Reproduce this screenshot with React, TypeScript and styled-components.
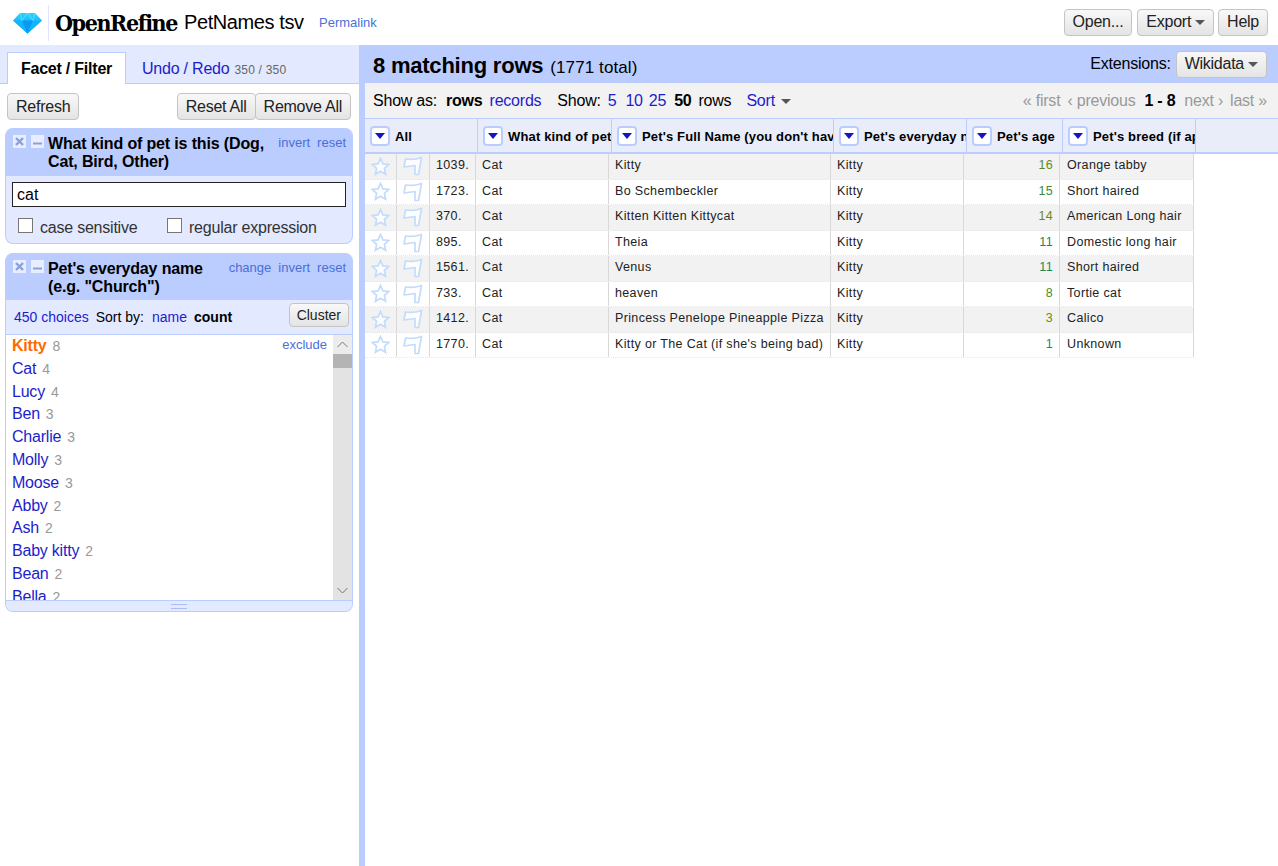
import React, { FC } from 'react'
import styled, { createGlobalStyle } from 'styled-components'

const BLUE = '#bbccff'
const LIGHT = '#e3e9ff'
const LINK = '#1d1dcc'
const ACTION = '#4a6fd8'

const GlobalStyle = createGlobalStyle`
    html, body {
        margin: 0;
        padding: 0;
        height: 100%;
        background: #fff;
        overflow: hidden;
    }
    body {
        font-family: "Liberation Sans", Arial, sans-serif;
        font-size: 16px;
        letter-spacing: -0.22px;
        color: #000;
    }
`

const Page = styled.div`
    width: 1278px;
    height: 866px;
    display: flex;
    flex-direction: column;
`

const Header = styled.header`
    height: 45px;
    flex: none;
    display: flex;
    align-items: center;
    padding: 0 10px 0 13px;
`

const LogoDivider = styled.div`
    width: 1px;
    height: 36px;
    margin: 0 6px 0 6px;
    background: #dde5ff;
`

const Brand = styled.span`
    font-family: "DejaVu Serif Condensed", "DejaVu Serif", serif;
    font-stretch: condensed;
    font-weight: bold;
    font-size: 23px;
    letter-spacing: -1.4px;
    width: 129px;
    white-space: nowrap;
`

const ProjectName = styled.span`
    font-size: 20px;
    width: 135px;
    letter-spacing: -0.4px;
    white-space: nowrap;
`

const Permalink = styled.a`
    font-size: 13px;
    letter-spacing: 0;
    color: ${ACTION};
`

const HeaderButtons = styled.div`
    margin-left: auto;
    display: flex;
    gap: 4px;
    margin-top: -1px;
`

const Button = styled.button<{ $joined?: boolean }>`
    height: 27px;
    padding: 0 8px;
    font: 16px "Liberation Sans", Arial, sans-serif;
    letter-spacing: -0.25px;
    color: #222;
    border: 1px solid #c4c4c4;
    border-radius: 4px;
    background: linear-gradient(#f8f8f8, #e4e4e4);
    white-space: nowrap;
    ${({ $joined }) => $joined && 'margin-left: -1px;'}
`

const OpenButton = styled(Button)`
    margin-right: 1px;
`

const Caret = styled.span<{ $gap?: number }>`
    display: inline-block;
    margin-left: ${({ $gap }) => $gap ?? 4}px;
    vertical-align: 2px;
    border-left: 5px solid transparent;
    border-right: 5px solid transparent;
    border-top: 5px solid #555;
`

const Main = styled.div`
    flex: 1;
    display: flex;
    min-height: 0;
`

const LeftPanel = styled.aside`
    width: 359px;
    flex: none;
    border-right: 6px solid ${BLUE};
`

const TabBar = styled.div`
    height: 39px;
    box-sizing: border-box;
    background: ${LIGHT};
    border-bottom: 1px solid ${BLUE};
    padding: 7px 0 0 7px;
    display: flex;
    align-items: flex-end;
`

const ActiveTab = styled.div`
    width: 119px;
    height: 32px;
    margin-bottom: -1px;
    box-sizing: border-box;
    background: #fff;
    border: 1px solid ${BLUE};
    border-bottom: 0;
    font-weight: bold;
    text-align: center;
    line-height: 31px;
`

const OtherTab = styled.div`
    margin-left: 16px;
    height: 31px;
    line-height: 33px;
    color: ${LINK};
`

const TabCount = styled.span`
    font-size: 12px;
    letter-spacing: 0.2px;
    color: #666;
    margin-left: 5px;
`

const FacetControls = styled.div`
    display: flex;
    padding: 9px 8px 8px 7px;
`

const Spacer = styled.div`
    flex: 1;
`

const Facet = styled.section`
    margin: 0 6px 9px 5px;
    border-radius: 8px;
    overflow: hidden;
    border: 1px solid ${BLUE};
    border-top: 0;
    background: ${LIGHT};
`

const FacetTitleBar = styled.div<{ $height: number }>`
    height: ${({ $height }) => $height}px;
    box-sizing: border-box;
    background: ${BLUE};
    display: flex;
    padding: 7px 6px 0 7px;
`

const FacetIcon = styled.svg`
    width: 13px;
    height: 13px;
    flex: none;
    margin: 0 5px 0 0;
`

const FacetTitle = styled.div`
    flex: 1;
    font-weight: bold;
    line-height: 18px;
    letter-spacing: -0.15px;
    margin-left: -1px;
`

const FacetAction = styled.a`
    font-size: 13px;
    line-height: 17px;
    letter-spacing: 0;
    color: ${ACTION};
    margin-top: -1px;
    margin-left: 7px;
    white-space: nowrap;
`

const SearchBox = styled.input`
    display: block;
    box-sizing: border-box;
    width: 334px;
    height: 25px;
    margin: 6px 0 0 6px;
    padding: 0 4px;
    border: 1px solid #222;
    font: 16px "Liberation Sans", Arial, sans-serif;
    color: #000;
    background: #fff;
`

const OptionRow = styled.div`
    height: 36px;
    display: flex;
    align-items: center;
    padding: 6px 0 0 12px;
    box-sizing: border-box;
`

const CheckBox = styled.span`
    width: 15px;
    height: 15px;
    flex: none;
    box-sizing: border-box;
    border: 1px solid #767676;
    background: #fff;
    margin-right: 7px;
    margin-top: -6px;
`

const OptionLabel = styled.span`
    color: #333;
    width: 127px;
    white-space: nowrap;
`

const ChoiceBar = styled.div`
    height: 34px;
    box-sizing: border-box;
    display: flex;
    align-items: center;
    padding: 0 3px 0 8px;
    font-size: 14px;
    letter-spacing: 0;
`

const ChoiceLink = styled.a`
    color: ${LINK};
    font-size: 14px;
`

const ChoiceText = styled.span<{ $bold?: boolean }>`
    font-weight: ${({ $bold }) => ($bold ? 'bold' : 'normal')};
    margin-left: 7px;
`

const SortLink = styled.a`
    color: ${LINK};
    margin-left: 8px;
`

const ClusterButton = styled(Button)`
    height: 24px;
    padding: 0 7px;
    font-size: 14px;
    letter-spacing: 0;
    margin: -5px 0 0 auto;
`

const ChoiceArea = styled.div`
    height: 266px;
    display: flex;
    background: #fff;
    border-top: 1px solid ${BLUE};
    box-sizing: border-box;
`

const ChoiceList = styled.div`
    flex: 1;
    overflow: hidden;
    padding: 0 6px 0 6px;
    position: relative;
`

const Choice = styled.div`
    height: 22.8px;
    line-height: 21px;
    white-space: nowrap;
`

const ChoiceName = styled.a<{ $selected?: boolean }>`
    color: ${({ $selected }) => ($selected ? '#ff6a00' : LINK)};
    font-weight: ${({ $selected }) => ($selected ? 'bold' : 'normal')};
`

const ChoiceCount = styled.span`
    font-size: 14px;
    letter-spacing: 0;
    color: #999;
    margin-left: 6px;
`

const ExcludeLink = styled.a`
    position: absolute;
    right: 6px;
    top: 1px;
    font-size: 13px;
    line-height: 17px;
    letter-spacing: 0;
    color: ${ACTION};
`

const Scrollbar = styled.div`
    width: 19px;
    flex: none;
    display: flex;
    flex-direction: column;
    background: #e3e3e3;
`

const ScrollButton = styled.div<{ $bottom?: boolean }>`
    height: 19px;
    display: flex;
    align-items: center;
    justify-content: center;
    background: ${({ $bottom }) => ($bottom ? '#e3e3e3' : '#ececec')};
    ${({ $bottom }) => $bottom && 'margin-top: auto;'}
`

const ScrollThumb = styled.div`
    height: 14px;
    background: #b4b4b4;
`

const Resizer = styled.div`
    height: 10px;
    background: ${LIGHT};
    border-top: 1px solid ${BLUE};
    display: flex;
    align-items: center;
    justify-content: center;
`

const ResizerGrip = styled.div`
    width: 16px;
    height: 3px;
    border-top: 1px solid #a9bdf5;
    border-bottom: 1px solid #a9bdf5;
`

const RightPanel = styled.main`
    flex: 1;
    min-width: 0;
`

const Summary = styled.div`
    height: 38px;
    box-sizing: border-box;
    background: ${BLUE};
    display: flex;
    align-items: center;
    padding: 4px 11px 0 8px;
`

const SummaryTitle = styled.span`
    font-size: 22px;
    font-weight: bold;
`

const SummaryTotal = styled.span`
    font-size: 17px;
    letter-spacing: 0.1px;
    margin-left: 7px;
    margin-top: 3px;
`

const ExtensionsLabel = styled.span`
    margin: -4px 5px 0 auto;
`

const ExtensionsButton = styled(Button)`
    margin-top: -4px;
`

const Toolbar = styled.div`
    height: 35px;
    box-sizing: border-box;
    background: #f2f2f2;
    display: flex;
    align-items: center;
    padding: 0 11px 0 8px;
`

const ToolText = styled.span<{ $bold?: boolean; $gap?: number }>`
    font-weight: ${({ $bold }) => ($bold ? 'bold' : 'normal')};
    margin-left: ${({ $gap }) => $gap ?? 0}px;
    white-space: nowrap;
`

const ToolLink = styled.a<{ $gap?: number }>`
    color: ${LINK};
    margin-left: ${({ $gap }) => $gap ?? 0}px;
`

const Pager = styled.div`
    margin-left: auto;
    display: flex;
    gap: 7px;
`

const PagerText = styled.span<{ $current?: boolean }>`
    color: ${({ $current }) => ($current ? '#000' : '#999')};
    font-weight: ${({ $current }) => ($current ? 'bold' : 'normal')};
    margin: ${({ $current }) => ($current ? '0 2px' : '0')};
`

const HeaderRow = styled.div`
    height: 36px;
    box-sizing: border-box;
    display: grid;
    grid-template-columns: 113px 134px 222px 133px 96px 133px;
    background: #e9ecf9;
    border-top: 1px solid ${BLUE};
    border-bottom: 2px solid ${BLUE};
`

const HeaderCell = styled.div`
    display: flex;
    align-items: center;
    overflow: hidden;
    white-space: nowrap;
    border-right: 1px solid ${BLUE};
    padding-left: 5px;
    font-size: 13px;
    font-weight: bold;
    letter-spacing: 0.15px;
`

const HeaderLabel = styled.span`
    margin-top: 2px;
`

const ColumnMenu = styled.span`
    flex: none;
    width: 20px;
    height: 20px;
    box-sizing: border-box;
    margin-right: 5px;
    background: #fff;
    border: 2px solid ${BLUE};
    border-radius: 4px;
    display: flex;
    justify-content: center;
    padding-top: 5px;
    &::before {
        content: '';
        width: 0;
        height: 0;
        border-left: 5px solid transparent;
        border-right: 5px solid transparent;
        border-top: 6px solid #1414c8;
    }
`

const DataRow = styled.div<{ $odd: boolean }>`
    height: 25.5px;
    width: 829px;
    box-sizing: border-box;
    display: grid;
    grid-template-columns: 32px 33px 46px 133px 222px 133px 96px 134px;
    background: ${({ $odd }) => ($odd ? '#f2f2f2' : '#fff')};
    border-bottom: 1px dotted #e8e8e8;
`

const DataCell = styled.div<{ $numeric?: string }>`
    display: flex;
    align-items: center;
    justify-content: ${({ $numeric }) => ($numeric ? 'flex-end' : 'flex-start')};
    color: ${({ $numeric }) => $numeric ?? '#222'};
    box-sizing: border-box;
    padding: 0 6px 2px;
    font-size: 12.5px;
    letter-spacing: 0.35px;
    border-right: 1px solid #d8d8d8;
    white-space: nowrap;
    overflow: hidden;
    &:last-child {
        padding-left: 7px;
    }
`

const IconCell = styled(DataCell)`
    padding: 0;
    justify-content: center;
`

const Diamond: FC = () => (
    <svg width="29" height="22" viewBox="0 0 29 22">
        <defs>
            <linearGradient id="gem" x1="0" y1="0" x2="0" y2="1">
                <stop offset="0" stopColor="#28d4ff" />
                <stop offset="1" stopColor="#009cf5" />
            </linearGradient>
        </defs>
        <path d="M7 1h15l7 7.5L14.5 21.500 0 8.500z" fill="url(#gem)" />
        <path d="M0 8.500h29L14.500 21.500z" fill="#14b4fb" />
        <path d="M9 8.500h11L14.500 21.500z" fill="#0a9af2" />
        <path d="M7 1l2 7.500L14.500 1l5.500 7.500L22 1" fill="none" stroke="#7be4ff" strokeWidth="0.7" />
    </svg>
)

const CloseIcon: FC = () => (
    <FacetIcon viewBox="0 0 13 13">
        <rect width="13" height="13" fill="#e8edff" />
        <path d="M3 3l7 7M10 3l-7 7" stroke="#8aa0dc" strokeWidth="2.4" />
    </FacetIcon>
)

const MinimizeIcon: FC = () => (
    <FacetIcon viewBox="0 0 13 13">
        <rect width="13" height="13" fill="#e8edff" />
        <path d="M2 8.500h9" stroke="#8aa0dc" strokeWidth="2" />
    </FacetIcon>
)

const Star: FC = () => (
    <svg width="19" height="19" viewBox="0 0 19 19">
        <path d="M9.500 1.500l2.400 5.400 5.800.6-4.300 3.900 1.200 5.800-5.100-3-5.100 3 1.200-5.800L1.300 7.500l5.800-.6z" fill="#fff" fillOpacity="0.85" stroke="#c4dcfb" strokeWidth="1.700" />
    </svg>
)

const Flag: FC = () => (
    <svg width="20" height="20" viewBox="0 0 20 20">
        <path d="M2.500 3C8 4 13 3.500 18.500 1.500L15.500 18.500H12L12 9.500 1 11z" fill="#fff" fillOpacity="0.85" stroke="#c4dcfb" strokeWidth="1.700" strokeLinejoin="round" />
    </svg>
)

const Chevron: FC<{ down?: boolean }> = ({ down }) => (
    <svg width="11" height="7" viewBox="0 0 11 7">
        <path d={down ? 'M.5 1l5 5 5-5' : 'M.5 6l5-5 5 5'} fill="none" stroke="#777" strokeWidth="1" />
    </svg>
)

const choices: Array<[string, number]> = [
    ['Cat', 4], ['Lucy', 4], ['Ben', 3], ['Charlie', 3], ['Molly', 3], ['Moose', 3],
    ['Abby', 2], ['Ash', 2], ['Baby kitty', 2], ['Bean', 2], ['Bella', 2],
]

const columnHeaders = ['All', 'What kind of pet is this', "Pet's Full Name (you don't have", "Pet's everyday name", "Pet's age", "Pet's breed (if applicable)"]

const rows: Array<[string, string, string, string, string]> = [
    ['1039.', 'Kitty', '16', '#5d8a1c', 'Orange tabby'],
    ['1723.', 'Bo Schembeckler', '15', '#3d8a3a', 'Short haired'],
    ['370.', 'Kitten Kitten Kittycat', '14', '#6e8a10', 'American Long hair'],
    ['895.', 'Theia', '11', '#158a5a', 'Domestic long hair'],
    ['1561.', 'Venus', '11', '#158a5a', 'Short haired'],
    ['733.', 'heaven', '8', '#4f8a20', 'Tortie cat'],
    ['1412.', 'Princess Penelope Pineapple Pizza', '3', '#6e8a10', 'Calico'],
    ['1770.', "Kitty or The Cat (if she's being bad)", '1', '#158a6a', 'Unknown'],
]

export default function App() {
    return (
        <Page>
            <GlobalStyle />
            <Header>
                <Diamond />
                <LogoDivider />
                <Brand>OpenRefine</Brand>
                <ProjectName>PetNames tsv</ProjectName>
                <Permalink>Permalink</Permalink>
                <HeaderButtons>
                    <OpenButton>Open...</OpenButton>
                    <Button>Export<Caret /></Button>
                    <Button>Help</Button>
                </HeaderButtons>
            </Header>
            <Main>
                <LeftPanel>
                    <TabBar>
                        <ActiveTab>Facet / Filter</ActiveTab>
                        <OtherTab>Undo / Redo<TabCount>350 / 350</TabCount></OtherTab>
                    </TabBar>
                    <FacetControls>
                        <Button>Refresh</Button>
                        <Spacer />
                        <Button>Reset All</Button>
                        <Button $joined>Remove All</Button>
                    </FacetControls>
                    <Facet>
                        <FacetTitleBar $height={48}>
                            <CloseIcon />
                            <MinimizeIcon />
                            <FacetTitle>What kind of pet is this (Dog,<br />Cat, Bird, Other)</FacetTitle>
                            <FacetAction>invert</FacetAction>
                            <FacetAction>reset</FacetAction>
                        </FacetTitleBar>
                        <SearchBox defaultValue="cat" />
                        <OptionRow>
                            <CheckBox />
                            <OptionLabel>case sensitive</OptionLabel>
                            <CheckBox />
                            <OptionLabel>regular expression</OptionLabel>
                        </OptionRow>
                    </Facet>
                    <Facet>
                        <FacetTitleBar $height={47}>
                            <CloseIcon />
                            <MinimizeIcon />
                            <FacetTitle>Pet's everyday name<br />(e.g. "Church")</FacetTitle>
                            <FacetAction>change</FacetAction>
                            <FacetAction>invert</FacetAction>
                            <FacetAction>reset</FacetAction>
                        </FacetTitleBar>
                        <ChoiceBar>
                            <ChoiceLink>450 choices</ChoiceLink>
                            <ChoiceText>Sort by:</ChoiceText>
                            <SortLink>name</SortLink>
                            <ChoiceText $bold>count</ChoiceText>
                            <ClusterButton>Cluster</ClusterButton>
                        </ChoiceBar>
                        <ChoiceArea>
                            <ChoiceList>
                                <Choice>
                                    <ChoiceName $selected>Kitty</ChoiceName>
                                    <ChoiceCount>8</ChoiceCount>
                                </Choice>
                                <ExcludeLink>exclude</ExcludeLink>
                                {choices.map(([name, count]) => (
                                    <Choice key={name}>
                                        <ChoiceName>{name}</ChoiceName>
                                        <ChoiceCount>{count}</ChoiceCount>
                                    </Choice>
                                ))}
                            </ChoiceList>
                            <Scrollbar>
                                <ScrollButton><Chevron /></ScrollButton>
                                <ScrollThumb />
                                <ScrollButton $bottom><Chevron down /></ScrollButton>
                            </Scrollbar>
                        </ChoiceArea>
                        <Resizer><ResizerGrip /></Resizer>
                    </Facet>
                </LeftPanel>
                <RightPanel>
                    <Summary>
                        <SummaryTitle>8 matching rows</SummaryTitle>
                        <SummaryTotal>(1771 total)</SummaryTotal>
                        <ExtensionsLabel>Extensions:</ExtensionsLabel>
                        <ExtensionsButton>Wikidata<Caret /></ExtensionsButton>
                    </Summary>
                    <Toolbar>
                        <ToolText>Show as:</ToolText>
                        <ToolText $bold $gap={9}>rows</ToolText>
                        <ToolLink $gap={7}>records</ToolLink>
                        <ToolText $gap={16}>Show:</ToolText>
                        <ToolLink $gap={7}>5</ToolLink>
                        <ToolLink $gap={9}>10</ToolLink>
                        <ToolLink $gap={6}>25</ToolLink>
                        <ToolText $bold $gap={8}>50</ToolText>
                        <ToolText $gap={7}>rows</ToolText>
                        <ToolLink $gap={15}>Sort<Caret $gap={6} /></ToolLink>
                        <Pager>
                            <PagerText>« first</PagerText>
                            <PagerText>‹ previous</PagerText>
                            <PagerText $current>1 - 8</PagerText>
                            <PagerText>next ›</PagerText>
                            <PagerText>last »</PagerText>
                        </Pager>
                    </Toolbar>
                    <HeaderRow>
                        {columnHeaders.map(title => (
                            <HeaderCell key={title}>
                                <ColumnMenu />
                                <HeaderLabel>{title}</HeaderLabel>
                            </HeaderCell>
                        ))}
                    </HeaderRow>
                    {rows.map(([index, fullName, age, ageColor, breed], i) => (
                        <DataRow key={index} $odd={i % 2 === 0}>
                            <IconCell><Star /></IconCell>
                            <IconCell><Flag /></IconCell>
                            <DataCell>{index}</DataCell>
                            <DataCell>Cat</DataCell>
                            <DataCell>{fullName}</DataCell>
                            <DataCell>Kitty</DataCell>
                            <DataCell $numeric={ageColor}>{age}</DataCell>
                            <DataCell>{breed}</DataCell>
                        </DataRow>
                    ))}
                </RightPanel>
            </Main>
        </Page>
    )
}
